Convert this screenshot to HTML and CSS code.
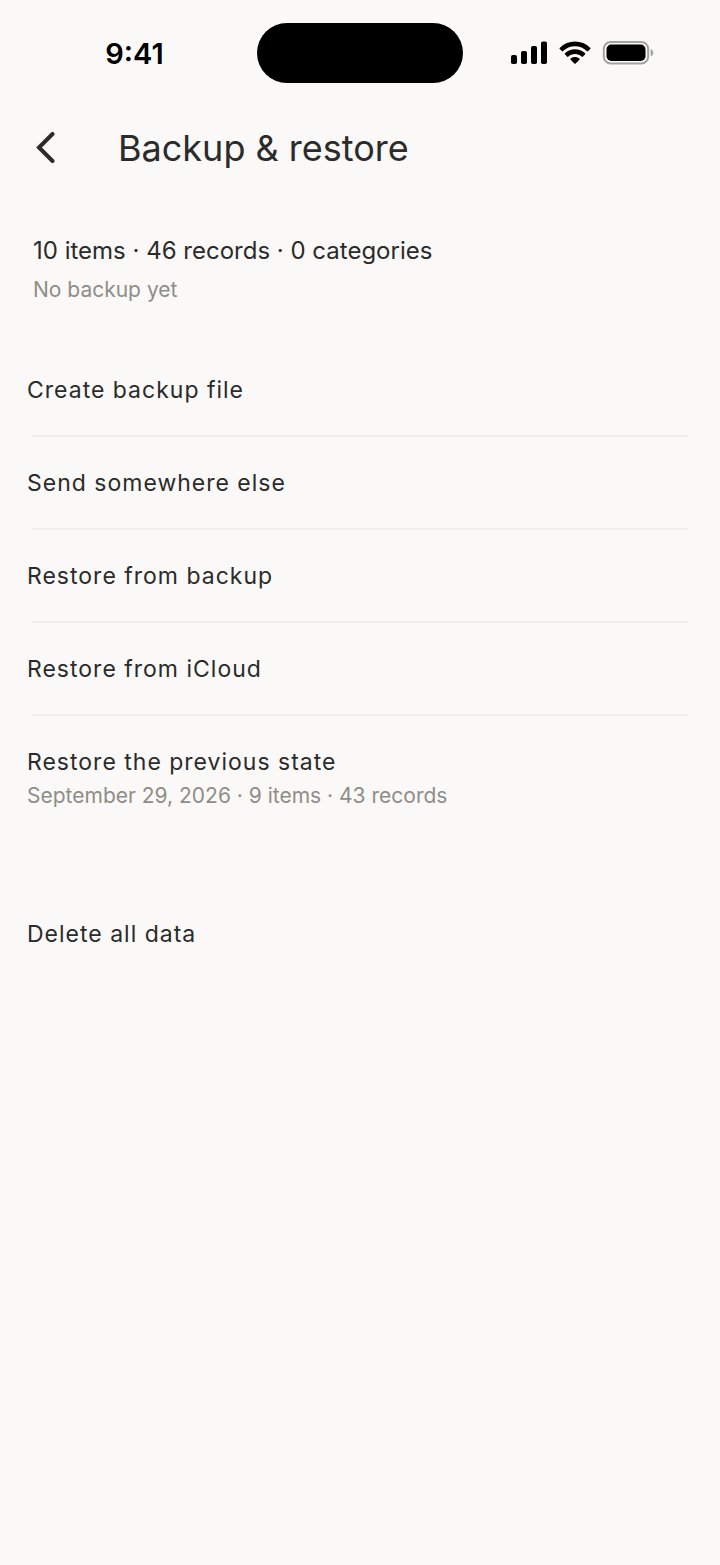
FILE: index.html
```html
<!DOCTYPE html>
<html lang="en">
<head>
    <meta charset="UTF-8">
    <meta name="viewport" content="width=device-width, initial-scale=1.0">
    <title>Backup &amp; restore</title>
    <link rel="stylesheet" href="styles.css">
</head>
<body>
    <div class="status-bar">
        <div class="status-time">9:41</div>
        <div class="island"></div>
        <div class="status-icons">
            <svg width="37" height="24" viewBox="0 0 37 24">
                <rect x="0" y="14" width="6" height="9" rx="1.8"/>
                <rect x="10" y="10" width="6" height="13" rx="1.8"/>
                <rect x="20" y="5" width="6" height="18" rx="1.8"/>
                <rect x="30" y="0.5" width="6" height="22.5" rx="1.8"/>
            </svg>
            <svg width="32" height="24" viewBox="1 0 30 22">
                <path d="M16 4.6c4.4 0 8.4 1.7 11.4 4.7.2.2.6.2.8 0l2.2-2.2c.3-.3.3-.7 0-.9C22.4-1.7 9.6-1.7 1.6 6.2c-.3.2-.3.6 0 .9l2.2 2.2c.2.2.6.2.8 0C7.6 6.3 11.6 4.6 16 4.6z"/>
                <path d="M16 12c2.4 0 4.7.9 6.4 2.5.3.2.6.2.9 0l2.2-2.3c.2-.2.2-.6 0-.9-5.4-5-13.6-5-19 0-.2.3-.2.7 0 .9l2.2 2.3c.3.2.6.2.9 0C11.3 12.9 13.6 12 16 12z"/>
                <path d="M20.3 17.1c.2-.2.2-.6 0-.8-2.5-2.1-6.1-2.1-8.6 0-.2.2-.2.6 0 .8l3.9 3.9c.2.2.6.2.8 0z"/>
            </svg>
            <svg width="52" height="24" viewBox="0 0 52 24">
                <rect x="1.8" y="1" width="44.4" height="21.5" rx="7" fill="none" stroke="#a3a3a2" stroke-width="2"/>
                <rect x="4.5" y="3.6" width="39" height="16.4" rx="4.8"/>
                <path d="M48.7 8v7.5c1.6-.7 2.6-2.1 2.6-3.75S50.3 8.7 48.7 8z" fill="#a3a3a2"/>
            </svg>
        </div>
    </div>

    <header class="header">
        <button class="back-button" type="button" aria-label="Back">
            <svg width="20" height="32" viewBox="0 0 20 32">
                <path d="M16.5 2L3 15.5l13.5 13.5"/>
            </svg>
        </button>
        <h1>Backup &amp; restore</h1>
    </header>

    <main>
        <section class="summary">
            <p class="summary-counts">10 items · 46 records · 0 categories</p>
            <p class="note">No backup yet</p>
        </section>

        <ul class="actions">
            <li><button type="button">Create backup file</button></li>
            <li><button type="button">Send somewhere else</button></li>
            <li><button type="button">Restore from backup</button></li>
            <li><button type="button">Restore from iCloud</button></li>
            <li>
                <button type="button">
                    Restore the previous state
                    <span class="note">September 29, 2026 · 9 items · 43 records</span>
                </button>
            </li>
        </ul>

        <button class="delete-button" type="button">Delete all data</button>
    </main>
</body>
</html>
```
FILE: styles.css
```css
* {
    box-sizing: border-box;
}
body {
    margin: 0;
    background: #faf9f7;
    color: #2b2b2b;
    font-family: Inter, sans-serif;
}
h1, p, ul {
    margin: 0;
    padding: 0;
    font-weight: 400;
}
button {
    border: 0;
    padding: 0;
    background: none;
    color: inherit;
    font: inherit;
    text-align: left;
    cursor: pointer;
}
svg {
    display: block;
}
.status-bar {
    display: grid;
    grid-template-columns: 1fr 206px 1fr;
    align-items: center;
    height: 106px;
    color: #000;
}
.status-time {
    padding-left: 12px;
    font-size: 29px;
    font-weight: 600;
    text-align: center;
}
.island {
    height: 60px;
    border-radius: 30px;
    background: #000;
}
.status-icons {
    display: flex;
    gap: 11px;
    padding-left: 48px;
}
.header {
    display: flex;
    align-items: center;
    gap: 62px;
    height: 84px;
    padding: 0 36px;
}
.back-button path {
    fill: none;
    stroke: #2b2b2b;
    stroke-width: 4;
    stroke-linecap: round;
}
.header h1 {
    font-size: 36px;
    line-height: 44px;
}
.summary {
    display: grid;
    gap: 4px;
    padding: 43px 33px 37px;
}
.summary-counts {
    font-size: 24px;
    line-height: 36px;
}
.note {
    display: block;
    color: #8e8d89;
    font-size: 21px;
    line-height: 34px;
    letter-spacing: 0;
}
.actions {
    list-style: none;
}
.actions button,
.delete-button {
    display: block;
    width: 100%;
    padding: 29px 27px 28px;
    font-size: 23px;
    line-height: 34px;
    letter-spacing: 1px;
}
.actions li:not(:last-child)::after {
    content: "";
    display: block;
    height: 2px;
    margin: 0 32px;
    background: #efeeec;
}
.delete-button {
    margin-top: 47px;
}
```
